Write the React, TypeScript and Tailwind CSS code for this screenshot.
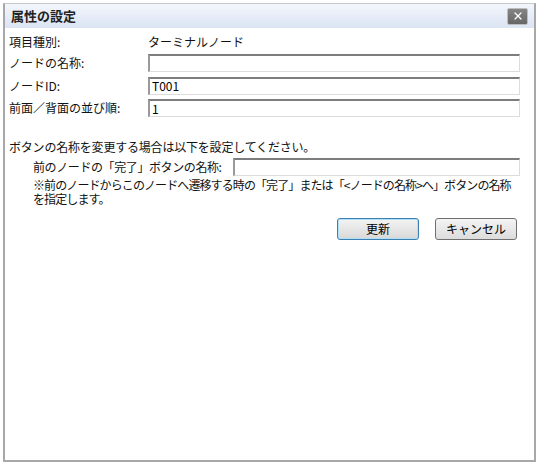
import { X } from "lucide-react";

const font = { fontFamily: '"Noto Sans CJK JP", "Noto Sans", sans-serif' };

const Field = ({ value = "", className = "" }: { value?: string; className?: string }) => (
  <div
    className={`h-[18px] flex items-center pl-[2px] text-[12px] leading-none text-black bg-white border-t-2 border-l-2 border-t-[#7d7d7d] border-l-[#9a9a9a] border-r border-b border-r-[#dcdcdc] border-b-[#dcdcdc] ${className}`}
  >
    {value}
  </div>
);

export default function App() {
  return (
    <div className="w-[540px] h-[465px] bg-white p-[3px]" style={font}>
      <div className="h-[459px] w-[533px] flex flex-col border-2 border-[#a8a8a8] border-t border-t-[#c8c8c8] bg-white">
        <div className="h-[24px] flex items-center justify-between pl-[6px] pr-[6px] bg-gradient-to-b from-[#f3f6fc] to-[#dbe4f3]">
          <span className="text-[13px] font-bold text-[#222]">属性の設定</span>
          <div className="w-[21px] h-[17px] rounded-[2px] bg-gradient-to-b from-[#858585] to-[#666] flex items-center justify-center border border-[#bdbdbd]">
            <X size={12} strokeWidth={2.5} color="#fff" />
          </div>
        </div>

        <div className="flex flex-col px-[4px] pt-[4px] text-[12px] text-[#111] leading-none">
          <div className="flex items-center h-[20px]">
            <span className="w-[139px]">項目種別:</span>
            <span>ターミナルノード</span>
          </div>
          <div className="flex items-center h-[22px]">
            <span className="w-[139px]">ノードの名称:</span>
            <Field className="w-[372px]" />
          </div>
          <div className="flex items-center h-[23px]">
            <span className="w-[139px]">ノードID:</span>
            <Field className="w-[372px]" value="T001" />
          </div>
          <div className="flex items-center h-[22px]">
            <span className="w-[139px]">前面／背面の並び順:</span>
            <Field className="w-[372px]" value="1" />
          </div>

          <div className="mt-[20px] h-[15px] flex items-center tracking-[-0.2px]">ボタンの名称を変更する場合は以下を設定してください。</div>
          <div className="flex items-center h-[22px] mt-[2px] pl-[24px]">
            <span className="w-[200px] tracking-[-0.4px]">前のノードの「完了」ボタンの名称:</span>
            <Field className="w-[287px]" />
          </div>
          <p className="pl-[24px] whitespace-pre-line leading-[14px] tracking-[-0.9px]">
            {"※前のノードからこのノードへ遷移する時の「完了」または「<ノードの名称>へ」ボタンの名称\nを指定します。"}
          </p>

          <div className="flex justify-end gap-[16px] mt-[12px] pr-[13px]">
            <button className="w-[82px] h-[22px] rounded-[3px] border border-[#3c7fb1] bg-gradient-to-b from-[#f4f4f4] to-[#d8d8d8] text-[12px] text-black shadow-[inset_0_0_0_1px_#aee0f8]">
              更新
            </button>
            <button className="w-[82px] h-[22px] rounded-[3px] border border-[#707070] bg-gradient-to-b from-[#f4f4f4] to-[#dcdcdc] text-[12px] text-black">
              キャンセル
            </button>
          </div>
        </div>
      </div>
    </div>
  );
}
